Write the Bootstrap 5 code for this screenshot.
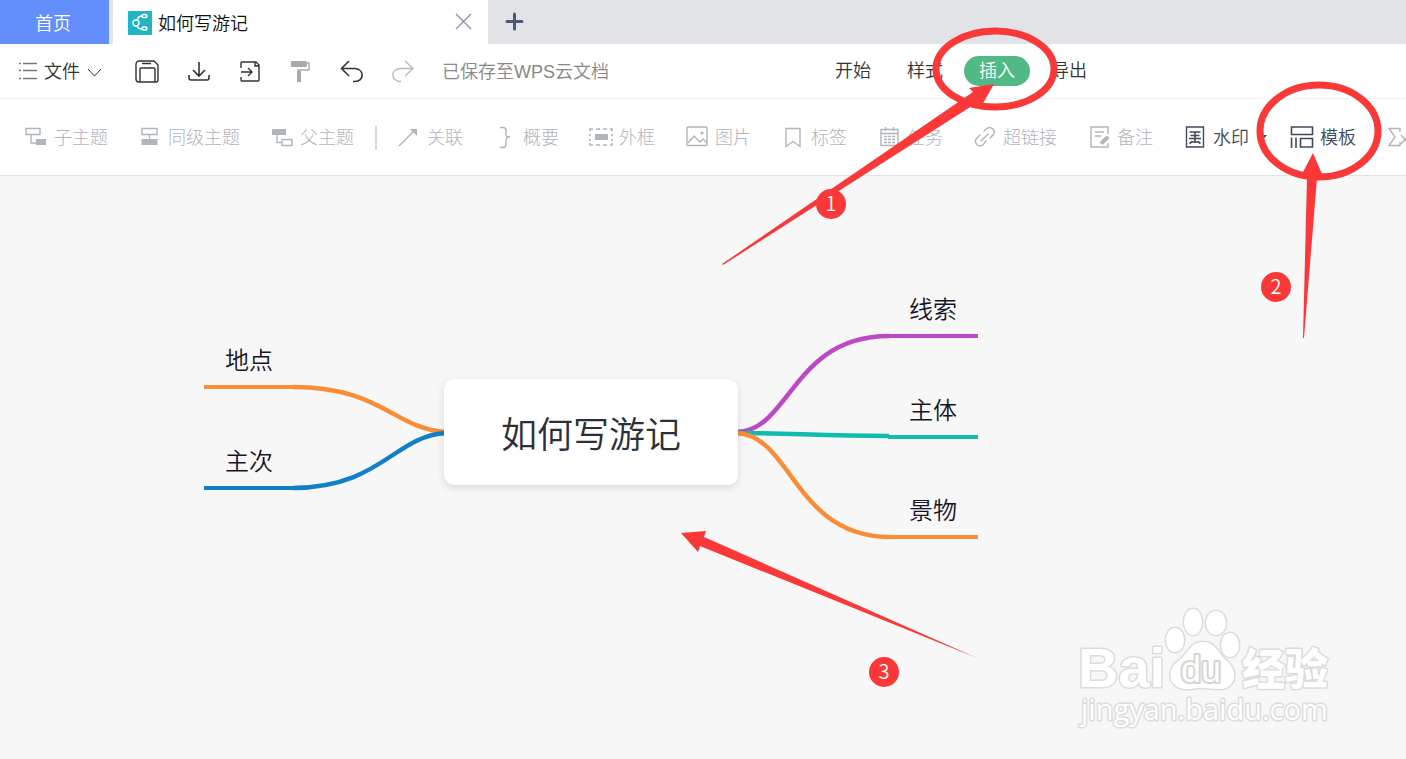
<!DOCTYPE html>
<html lang="zh-CN">
<head>
<meta charset="utf-8">
<meta name="viewport" content="width=device-width, initial-scale=1">
<title>如何写游记</title>
<link rel="stylesheet" href="https://cdn.jsdelivr.net/npm/bootstrap@5.3.0/dist/css/bootstrap.min.css">
<style>
  body { font: 350 18px/24px "Liberation Sans", "Noto Sans CJK SC", sans-serif; color: #333; background: #fff; }
  .ico { fill: none; stroke: currentColor; stroke-width: 1.4; flex: none; overflow: visible; }
  .ico-bold { stroke-width: 1.6; }
  .ico-plus { stroke-width: 3; color: #4b5975; }
  .ico-close { color: #8694b0; }
  .ico-list { color: #777; }
  .ico-roller { color: #aaa; }
  .ico-thin { stroke-width: 1; }
  .tab-strip { height: 44px; background: #e2e3e7; }
  .home-tab { width: 109px; padding: 4px 3px 0 0; background: #628ffc; }
  .doc-tab { width: 375px; background: #fff; color: #111; margin-left: 4px; padding: 0 15px; }
  .doc-name { margin-left: 6px; }
  .plain-btn { border: 0; background: none; padding: 0; color: inherit; display: flex; align-items: center; white-space: nowrap; font-weight: inherit; }
  .menu-row { height: 55px; border-bottom: 1px solid #f0f0f0; padding: 2px 0 0 16px; color: #333; }
  .quick-tools { margin-left: 34px; gap: 27px; }
  .quick-tools :disabled { color: #bbb; }
  .save-note { color: #888; margin-left: 28px; }
  .ribbon-tabs { margin: 0 0 2px 211px; gap: 6px; }
  .ribbon-tabs .nav-link { padding: 3px 15px; color: #333; border-radius: 15px; }
  .ribbon-tabs .nav-link.active { background: #50b985; color: #fff; }
  .ribbon { height: 77px; border-bottom: 1px solid #e2e2e2; padding: 2px 0 0 24px; font-weight: 300; }
  .tool-group { gap: 30px; }
  .tool { gap: 6px; color: #42495a; font-weight: 350; }
  .tool:disabled { color: #b0b4bb; font-weight: 300; }
  .ribbon-rule { width: 2px; height: 24px; background: #d5d8de; margin: 0 20px 0 21px; }
  .board { background: #f7f7f7; }
  .topic { position: absolute; width: 90px; font-size: 24px; line-height: 48px; text-align: center; color: #16142a; border-bottom: 4px solid; }
  .topic-root { position: absolute; left: 444px; top: 203px; width: 294px; height: 106px; padding-top: 8px; border-radius: 10px; background: #fff; font-size: 36px; color: #2b2f38; box-shadow: 0 3px 8px rgba(0,0,0,.12); }
  .purple { border-color: #bd48c5; } .teal { border-color: #10bcb0; } .orange { border-color: #fa8c35; } .blue { border-color: #1180c5; }
  .overlay-art { position: absolute; left: 0; top: 0; width: 100%; height: 100%; pointer-events: none; overflow: visible; }
  .step { position: absolute; width: 30px; height: 30px; border-radius: 50%; background: #fb3838; color: #fff; font: 350 20px/28px "Noto Sans CJK SC", sans-serif; text-align: center; }
</style>
</head>
<body class="vh-100 d-flex flex-column overflow-hidden position-relative">

<header>
  <div class="tab-strip d-flex">
    <a href="#" class="home-tab d-flex align-items-center justify-content-center text-white text-decoration-none">首页</a>
    <div class="doc-tab d-flex align-items-center">
      <svg class="ico" width="24" height="24"><rect y="1" width="24" height="24" rx="1" fill="#20b5c0" stroke="none"/><g stroke="#fff"><circle cx="8" cy="13" r="3"/><path d="M9 10C10 7 11 6 14 6M9 16C10 19 12 19 14 19"/><rect x="14" y="4.500" width="5" height="3" rx="1.500"/><rect x="14" y="17" width="5" height="3" rx="1.500"/></g></svg>
      <span class="doc-name pt-1">如何写游记</span>
      <button class="plain-btn ms-auto" aria-label="关闭"><svg class="ico ico-close" width="18" height="16"><path d="M1 0l15 15M16 0L1 15"/></svg></button>
    </div>
    <button class="plain-btn ms-3" aria-label="新建"><svg class="ico ico-plus" width="20" height="20" stroke-linecap="round"><path d="M3 9.500h15M10.500 2v15"/></svg></button>
  </div>

  <div class="menu-row d-flex align-items-center">
    <button class="plain-btn"><svg class="ico ico-list" width="24" height="24"><path d="M7 3.500h14M7 10.500h14M7 18.500h14"/><path d="M3 3.500h2M3 10.500h2M3 18.500h2"/></svg><span class="ms-1">文件</span><svg class="ico ico-thin ms-2" width="13" height="8"><path d="M0 1l6.500 7L13 1"/></svg></button>
    <div class="quick-tools d-flex align-items-center">
      <button class="plain-btn" aria-label="保存"><svg class="ico" width="24" height="24"><path d="M4 1h15l4 4v15a2 2 0 0 1-2 2H4a3 3 0 0 1-3-3V4a3 3 0 0 1 3-3ZM5 22V9a1 1 0 0 1 1-1h13a1 1 0 0 1 1 1v13M7 3.500h9"/></svg></button>
      <button class="plain-btn" aria-label="下载"><svg class="ico ico-bold" width="24" height="24"><path d="M13 2v14M7 10l6 6 6-6M3 15v3a2 2 0 0 0 2 2h16a2 2 0 0 0 2-2v-3"/></svg></button>
      <button class="plain-btn" aria-label="输出"><svg class="ico" width="24" height="24"><path d="M4 8V3a1 1 0 0 1 1-1h14l3 3v15a1 1 0 0 1-1 1H5a1 1 0 0 1-1-1v-3M18 2v4h4M4 12h11M11 8l4 4-4 4"/></svg></button>
      <button class="plain-btn" aria-label="格式刷"><svg class="ico ico-roller" width="24" height="24"><path d="M4 1h14a1 1 0 0 1 1 1v4a1 1 0 0 1-1 1H4a1 1 0 0 1-1-1V2a1 1 0 0 1 1-1ZM9 11h4v11H9z" fill="currentColor" stroke="none"/><path d="M19 3h2v7H10v3"/></svg></button>
      <button class="plain-btn" aria-label="撤销"><svg class="ico ico-bold" width="24" height="24"><path d="M10 1L2.500 8.500L10 16M2.500 8.500H16c10 1 9 13 0 13h-2"/></svg></button>
      <button class="plain-btn" aria-label="重做" disabled><svg class="ico" width="24" height="24"><path d="M15 1l8 7.500L15 16M23 8.500H10C0 9.500 1 21.500 10 21.500h1"/></svg></button>
    </div>
    <span class="save-note text-nowrap">已保存至WPS云文档</span>
    <nav class="ribbon-tabs nav flex-nowrap text-nowrap">
      <a class="nav-link" href="#">开始</a>
      <a class="nav-link" href="#">样式</a>
      <a class="nav-link active" href="#" aria-current="page">插入</a>
      <a class="nav-link" href="#">导出</a>
    </nav>
  </div>

  <div class="ribbon d-flex align-items-center">
    <div class="tool-group d-flex">
      <button class="plain-btn tool" disabled><svg class="ico" width="24" height="24"><path d="M2 2.500h14v6H2zM7 9v8h5"/><path d="M12 13h10v6H12z" fill="currentColor" stroke="none"/></svg><span>子主题</span></button>
      <button class="plain-btn tool" disabled><svg class="ico" width="24" height="24"><path d="M4 2.500h15v6H4zM11.500 9v4"/><path d="M3.500 13h16v6h-16z" fill="currentColor" stroke="none"/></svg><span>同级主题</span></button>
      <button class="plain-btn tool" disabled><svg class="ico" width="24" height="24"><path d="M2 3h14v6H2z" fill="currentColor" stroke="none"/><path d="M7 9v7.500h4M12 13.500h10v6H12z"/></svg><span>父主题</span></button>
    </div>
    <div class="ribbon-rule flex-shrink-0"></div>
    <div class="tool-group d-flex">
      <button class="plain-btn tool" disabled><svg class="ico" width="24" height="24"><path d="M2 20L18 4"/><path d="M13 3h7v7z" fill="currentColor" stroke="none"/></svg><span>关联</span></button>
      <button class="plain-btn tool" disabled><svg class="ico" width="24" height="24"><path d="M7 1.500h3q3 0 3 3v4q0 3 4 2-4 1-4 4v4q0 3-3 3H7"/></svg><span>概要</span></button>
      <button class="plain-btn tool" disabled><svg class="ico ico-bold" width="24" height="24"><path d="M1 5V3h3M7 3h4M14 3h4M21 3h2v2M23 8v2M23 13v2M23 17v2h-2M18 19h-4M11 19H7M4 19H1v-2M1 15v-2M1 10V8"/><path d="M6 8h13v6H6z" fill="currentColor" stroke="none"/></svg><span>外框</span></button>
      <button class="plain-btn tool" disabled><svg class="ico" width="24" height="24"><rect x="2" y="1" width="20" height="18.500" rx="1"/><path d="M3 17l6-7 6 6 3-3 4 4"/><circle cx="17" cy="7" r="1.600" fill="currentColor" stroke="none"/></svg><span>图片</span></button>
      <button class="plain-btn tool" disabled><svg class="ico" width="24" height="24"><path d="M5 2.500h14v18l-7-5-7 5z"/></svg><span>标签</span></button>
      <button class="plain-btn tool" disabled><svg class="ico" width="24" height="24"><path d="M4 3.500h17v16H4zM4 7.500h17M8.500 1v4M16.500 1v4"/><path d="M7 10.500h11M7 13.500h11M7 16.500h11" stroke-dasharray="3 1"/></svg><span>任务</span></button>
      <button class="plain-btn tool" disabled><svg class="ico" width="24" height="24" stroke-linecap="round"><path d="M8 15l7-7M11 5l3-2.500c4-3 9 2 6.500 6L17 12M7 9l-3 3c-4 4 1 10 6 7l3-4"/></svg><span>超链接</span></button>
      <button class="plain-btn tool" disabled><svg class="ico" width="24" height="24"><path d="M21 8V1H4v20h17v-4M8 6h9M8 10h6M14 17.500l7-7M15 18.500l7-7M13 17l7-7"/></svg><span>备注</span></button>
      <button class="plain-btn tool"><svg class="ico" width="24" height="24"><path d="M3.500 1h17v20h-17z"/><path class="ico-bold" d="M6.500 6h11M7.500 9.500h9M6 12.500h12M7.500 16h9M12 6v11M6.500 17.500l3-2M17.500 17.500l-3-2"/></svg><span>水印</span><svg class="ico ms-1" width="1" height="6"><path d="M-1 0h9l-4.500 5z" fill="currentColor" stroke="none"/></svg></button>
      <button class="plain-btn tool"><svg class="ico ico-bold" width="24" height="24"><path d="M1.500 1h21v7.500h-21zM1.500 11.500V22M6 11.500V22M10.500 12.500h12V21h-12z"/></svg><span>模板</span></button>
      <button class="plain-btn tool" disabled aria-label="公式"><svg class="ico" width="24" height="24"><path d="M14 6V2.500H3l6 8.500-6 8.500h11V16M15 9l8 9M23 9l-8 9"/></svg></button>
    </div>
  </div>
</header>

<main class="board position-relative flex-grow-1">
  <svg class="overlay-art">
    <g transform="translate(0 -176)" stroke-width="4.500" fill="none">
      <path stroke="#bd48c5" d="M736 432C790 432 792 336 889 336"/>
      <path stroke="#10bcb0" d="M736 433C790 433 820 436 889 436"/>
      <path stroke="#fa8c35" d="M736 433C792 435 794 536 889 537"/>
      <path stroke="#fa8c35" d="M293 387C382 387 394 429 446 432"/>
      <path stroke="#1180c5" d="M293 488C382 487 394 436 446 433"/>
    </g>
    <!-- site watermark -->
    <g transform="translate(0 -176)" fill="#fff" stroke="#dcdcdc" stroke-width="3" stroke-linejoin="round" paint-order="stroke" font-family="Liberation Sans, Noto Sans CJK SC, sans-serif">
      <text x="1078" y="687" font-size="56" font-weight="700">Bai</text>
      <ellipse cx="1175" cy="640" rx="9" ry="12"/><ellipse cx="1193" cy="622" rx="9" ry="13"/><ellipse cx="1216" cy="623" rx="10" ry="12"/><ellipse cx="1230" cy="645" rx="9" ry="12"/>
      <path d="M1203 642C1217 642 1218 655 1227 661C1240 673 1234 689 1220 689C1210 689 1203 687 1197 688C1188 690 1178 690 1173 683C1167 673 1173 664 1181 659C1189 652 1191 642 1203 642Z"/>
      <text x="1181" y="682" font-size="36" stroke-width="4" stroke="#d4d4d4">du</text>
      <text x="1242" y="685" font-size="43" font-weight="900">经验</text>
      <text x="1081" y="720" font-size="29" font-weight="400" font-family="Open Sans, sans-serif">jingyan.baidu.com</text>
    </g>
  </svg>
  <div class="topic orange" style="left:204px;top:161px">地点</div>
  <div class="topic blue" style="left:204px;top:262px">主次</div>
  <div class="topic purple" style="left:888px;top:110px">线索</div>
  <div class="topic teal" style="left:888px;top:211px">主体</div>
  <div class="topic orange" style="left:888px;top:311px">景物</div>
  <div class="topic-root d-flex align-items-center justify-content-center">如何写游记</div>
</main>

<!-- step markers over the editor -->
<svg class="overlay-art">
  <g fill="none" stroke="#fb3838" stroke-width="7"><ellipse cx="995" cy="69" rx="59" ry="38"/><ellipse cx="1319" cy="131" rx="59" ry="46"/></g>
  <g fill="#fb3838" stroke="none">
    <path d="M722 264L973 92L969 88L994 84L982 105L978 102L723 265Z"/>
    <path d="M1303 338L1307 178L1302 174L1313 153L1322 174L1317 178L1304 338Z"/>
    <path d="M977 658L700 546L698 552L681 533L706 531L704 537Z"/>
  </g>
</svg>
<span class="step" style="left:816px;top:189px">1</span>
<span class="step" style="left:1261px;top:272px">2</span>
<span class="step" style="left:869px;top:657px">3</span>

<script src="https://cdn.jsdelivr.net/npm/bootstrap@5.3.0/dist/js/bootstrap.bundle.min.js"></script>
</body>
</html>
